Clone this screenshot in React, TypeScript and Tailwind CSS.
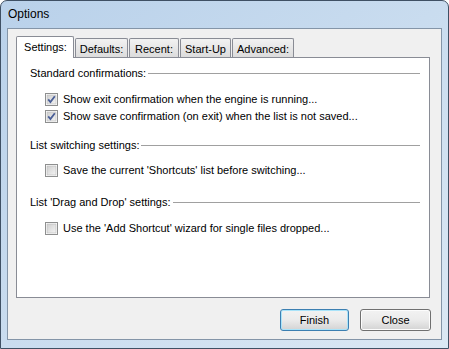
const tabs = ["Settings:", "Defaults:", "Recent:", "Start-Up", "Advanced:"];
const tabWidths = [58, 53, 50, 51, 62];

function CheckBox({ checked }: { checked: boolean }) {
  return (
    <svg width="13" height="13" viewBox="0 0 13 13" className="shrink-0">
      <defs>
        <linearGradient id="cbg" x1="0" y1="0" x2="1" y2="1">
          <stop offset="0" stopColor="#cfcfcf" />
          <stop offset="1" stopColor="#f4f4f4" />
        </linearGradient>
      </defs>
      <rect x="0.5" y="0.5" width="12" height="12" fill="#fff" stroke="#8e8f8f" />
      <rect x="2" y="2" width="9" height="9" fill="url(#cbg)" stroke="#b9b9b9" strokeWidth="0.6" />
      {checked && (
        <path d="M3.2 6.4 L5.4 9 L9.8 3.2" fill="none" stroke="#4a5f97" strokeWidth="1.8" />
      )}
    </svg>
  );
}

function Group({ title }: { title: string }) {
  return (
    <div className="flex h-[13px] items-center">
      <span className="whitespace-nowrap">{title}</span>
      <div className="ml-[2px] h-px flex-1 bg-[#a0a0a0]" />
    </div>
  );
}

function Option({ label, checked, className }: { label: string; checked: boolean; className?: string }) {
  return (
    <div className={`flex h-[17px] items-center pl-[15px] ${className ?? ""}`}>
      <CheckBox checked={checked} />
      <span className="ml-[5px] whitespace-nowrap">{label}</span>
    </div>
  );
}

export default function App() {
  return (
    <div
      className="h-[349px] w-[449px] overflow-hidden rounded-t-[7px] border border-[#3f5064] bg-gradient-to-br from-[#b9d1ea] via-[#c9dcef] to-[#dbe8f4] text-[11px] text-black"
      style={{ fontFamily: '"Liberation Sans", Arial, sans-serif' }}
    >
      <div className="h-[27px] pl-[7px] pt-[6px] text-[12px] leading-[15px]">Options</div>

      <div className="mx-[6px] h-[312px] border border-[#8495a8] bg-[#f0f0f0] pl-[8px] pr-[12px] pt-[7px]">
        {/* tab strip */}
        <div className="flex h-[21px] items-end">
          {tabs.map((t, i) => {
            const sel = i === 0;
            return (
              <div
                key={t}
                style={{ width: tabWidths[i] }}
                className={
                  sel
                    ? "relative z-10 -mb-px flex h-[22px] items-center justify-center rounded-t-[2px] border border-b-0 border-[#898c95] bg-white pb-[1px] pl-[1px] leading-[13px]"
                    : "ml-[1px] flex h-[19px] items-center justify-center rounded-t-[2px] border border-b-0 border-[#898c95] bg-gradient-to-b from-[#f2f2f2] to-[#dcdcdc] pt-[2px] leading-[13px]"
                }
              >
                {t}
              </div>
            );
          })}
        </div>

        {/* tab page */}
        <div className="h-[241px] w-[414px] border border-[#898c95] bg-white pl-[13px] pr-[9px] pt-[9px]">
          <Group title="Standard confirmations:" />
          <Option className="mt-[11px]" checked label="Show exit confirmation when the engine is running..." />
          <Option checked label="Show save confirmation (on exit) when the list is not saved..." />
          <div className="mt-[14px]">
            <Group title="List switching settings:" />
          </div>
          <Option className="mt-[10px]" checked={false} label="Save the current 'Shortcuts' list before switching..." />
          <div className="mt-[17px]">
            <Group title="List 'Drag and Drop' settings:" />
          </div>
          <Option className="mt-[11px]" checked={false} label="Use the 'Add Shortcut' wizard for single files dropped..." />
        </div>

        {/* buttons */}
        <div className="mt-[11px] flex justify-end gap-[11px] pr-[-1px]">
          <button className="h-[22px] w-[69px] rounded-[3px] border border-[#3c7fb1] bg-gradient-to-b from-[#f2f2f2] via-[#ebebeb] to-[#d3d3d3] leading-[13px] shadow-[inset_0_0_0_1px_#a9e3f9]">
            Finish
          </button>
          <button className="mr-[-2px] h-[22px] w-[71px] rounded-[3px] border border-[#707070] bg-gradient-to-b from-[#f2f2f2] via-[#ebebeb] to-[#d3d3d3] leading-[13px] shadow-[inset_0_0_0_1px_#fcfcfc]">
            Close
          </button>
        </div>
      </div>
    </div>
  );
}
